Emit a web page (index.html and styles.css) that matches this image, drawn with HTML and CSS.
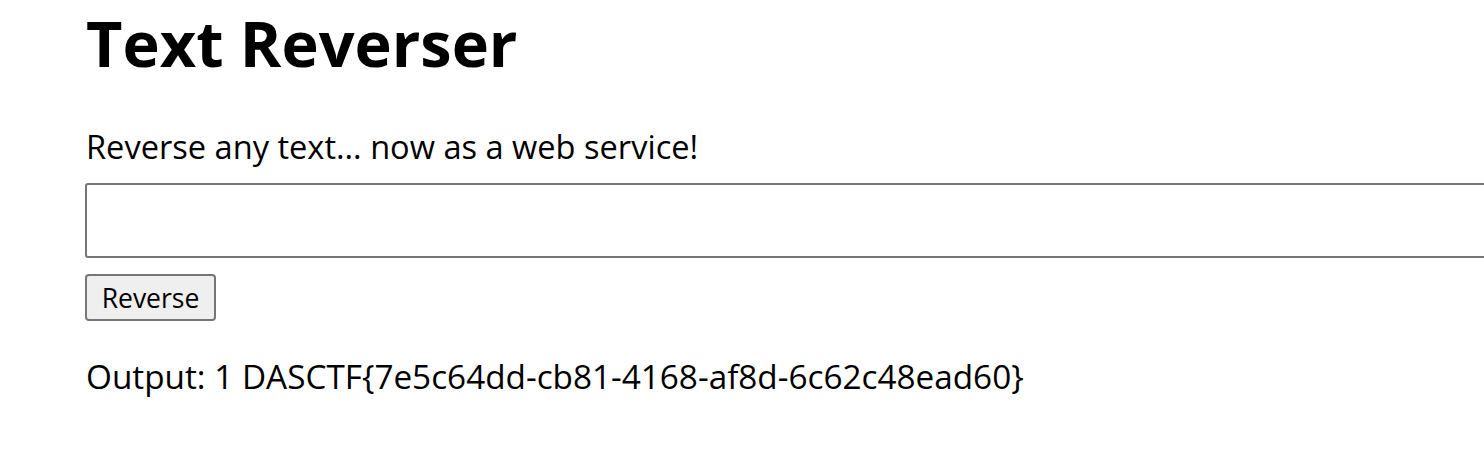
FILE: index.html
```html
<!DOCTYPE html>
<html lang="en">
<head>
<meta charset="utf-8">
<title>Text Reverser</title>
<link rel="stylesheet" href="styles.css">
</head>
<body>
<main class="page">
  <h1 class="title">Text Reverser</h1>
  <p class="intro">Reverse any text... now as a web service!</p>
  <form class="form">
    <input class="text-input" type="text" name="text">
    <button class="btn" type="button">Reverse</button>
  </form>
  <p class="output">Output: 1 DASCTF{7e5c64dd-cb81-4168-af8d-6c62c48ead60}</p>
</main>
</body>
</html>
```

FILE: styles.css
```css
html, body {
  margin: 0;
  padding: 0;
  background: #ffffff;
  overflow: hidden;
}

.page {
  padding-left: 85px;
  font-family: "Open Sans", "Noto Sans", sans-serif;
  color: #000000;
  overflow: hidden;
}

.title {
  margin: 0;
  padding: 3px 0 0 1px;
  font-size: 63px;
  line-height: 80px;
  font-weight: 700;
}

.intro {
  margin: 42px 0 0 1px;
  font-size: 32.6px;
  line-height: 44px;
}

.form {
  display: flex;
  flex-direction: column;
  align-items: flex-start;
  gap: 16px;
  margin-top: 14px;
}

.text-input {
  box-sizing: border-box;
  width: 1460px;
  height: 75px;
  border: 2px solid #767676;
  border-radius: 3px;
  background: #ffffff;
  font: inherit;
  padding: 0 8px;
  margin: 0;
}

.btn {
  box-sizing: border-box;
  width: 131px;
  height: 47px;
  border: 2px solid #767676;
  border-radius: 4px;
  background: #efefef;
  font-family: "Open Sans", "Noto Sans", sans-serif;
  font-size: 26.5px;
  color: #000000;
  padding: 0;
  margin: 0;
}

.output {
  margin: 33px 0 0 1px;
  font-size: 33.3px;
  line-height: 44px;
}
```
